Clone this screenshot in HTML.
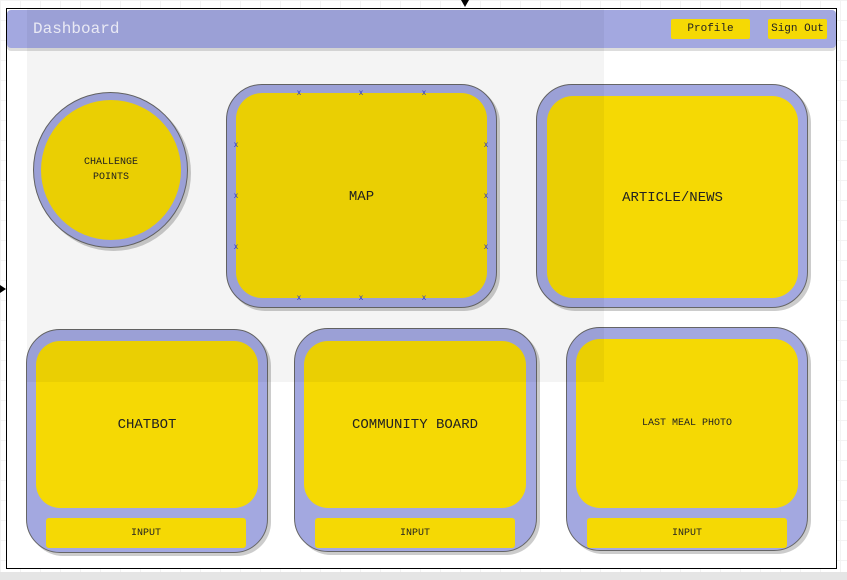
<!DOCTYPE html>
<html><head><style>
body{margin:0;width:847px;height:580px;position:relative;overflow:hidden;background:#fff;font-family:"Liberation Mono",monospace;color:#222;
background-image:linear-gradient(#f3f3f3 1px,transparent 1px),linear-gradient(90deg,#f3f3f3 1px,transparent 1px);background-size:20px 20px;}
div{position:absolute;box-sizing:border-box}
.frame{left:6px;top:8px;width:831px;height:561px;border:1px solid #000;background:#fff}
.bot{left:0;top:572px;width:847px;height:8px;background:#e5e5e5}
.o{background:#a3a8e0;border:1px solid #666;box-shadow:3px 3px 0 #ccc}
.y{background:#f5d904;display:flex;align-items:center;justify-content:center;text-align:center}
.ov{left:27px;top:9px;width:577px;height:373px;background:rgba(0,0,0,0.045)}
.x{color:#2233dd;font-size:8px;line-height:8px;width:8px;height:8px;text-align:center;font-family:"Liberation Sans",sans-serif}
</style></head><body>
<div class="frame"></div>
<div class="bot"></div>
<div style="left:7px;top:10px;width:829px;height:38px;background:#a3a8e0;border-radius:4px;box-shadow:0 3px 0 #ddd"></div>
<div style="left:33px;top:20px;color:#f4f4ff;font-size:16px">Dashboard</div>
<div class="y" style="left:671px;top:19px;width:79px;height:20px;font-size:11px;border-radius:2px">Profile</div>
<div class="y" style="left:768px;top:19px;width:59px;height:20px;font-size:11px;border-radius:2px">Sign Out</div>

<div class="o" style="left:33px;top:92px;width:155px;height:156px;border-radius:50%"></div>
<div class="y" style="left:41px;top:100px;width:140px;height:140px;border-radius:50%;font-size:10px;line-height:15px">CHALLENGE<br>POINTS</div>

<div class="o" style="left:226px;top:84px;width:271px;height:224px;border-radius:36px"></div>
<div class="y" style="left:236px;top:93px;width:251px;height:205px;border-radius:26px;font-size:14px;padding-top:3px">MAP</div>

<div class="o" style="left:536px;top:84px;width:272px;height:224px;border-radius:36px"></div>
<div class="y" style="left:547px;top:96px;width:251px;height:202px;border-radius:26px;font-size:14px;padding-top:2px">ARTICLE/NEWS</div>

<div class="o" style="left:26px;top:329px;width:242px;height:224px;border-radius:34px"></div>
<div class="y" style="left:36px;top:341px;width:222px;height:167px;border-radius:24px;font-size:14px">CHATBOT</div>
<div class="y" style="left:46px;top:518px;width:200px;height:30px;border-radius:3px;font-size:10px">INPUT</div>

<div class="o" style="left:294px;top:328px;width:243px;height:224px;border-radius:34px"></div>
<div class="y" style="left:304px;top:341px;width:222px;height:167px;border-radius:24px;font-size:14px">COMMUNITY BOARD</div>
<div class="y" style="left:315px;top:518px;width:200px;height:30px;border-radius:3px;font-size:10px">INPUT</div>

<div class="o" style="left:566px;top:327px;width:242px;height:224px;border-radius:34px"></div>
<div class="y" style="left:576px;top:339px;width:222px;height:169px;border-radius:24px;font-size:10px;padding-bottom:0">LAST MEAL PHOTO</div>
<div class="y" style="left:587px;top:518px;width:200px;height:30px;border-radius:3px;font-size:10px">INPUT</div>

<div class="x" style="left:295px;top:89px">x</div>
<div class="x" style="left:357px;top:89px">x</div>
<div class="x" style="left:420px;top:89px">x</div>
<div class="x" style="left:295px;top:294px">x</div>
<div class="x" style="left:357px;top:294px">x</div>
<div class="x" style="left:420px;top:294px">x</div>
<div class="x" style="left:232px;top:141px">x</div>
<div class="x" style="left:232px;top:192px">x</div>
<div class="x" style="left:232px;top:243px">x</div>
<div class="x" style="left:482px;top:141px">x</div>
<div class="x" style="left:482px;top:192px">x</div>
<div class="x" style="left:482px;top:243px">x</div>

<div class="ov"></div>
<div style="left:461px;top:0;width:0;height:0;border-left:4px solid transparent;border-right:4px solid transparent;border-top:7px solid #000"></div>
<div style="left:0;top:285px;width:0;height:0;border-top:4px solid transparent;border-bottom:4px solid transparent;border-left:6px solid #000"></div>
</body></html>
